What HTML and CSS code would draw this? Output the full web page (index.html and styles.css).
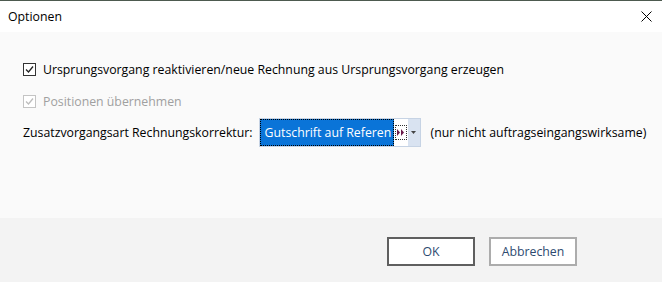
FILE: index.html
```html
<!DOCTYPE html>
<html lang="de">
<head>
  <meta charset="UTF-8">
  <title>Optionen</title>
  <link rel="stylesheet" href="styles.css">
</head>
<body>
  <div class="dialog">
    <div class="titlebar">
      <span class="title">Optionen</span>
      <svg class="close" width="11" height="11" viewBox="0 0 11 11">
        <path d="M0.5 0.5 L10.5 10.5 M10.5 0.5 L0.5 10.5" stroke="#000" stroke-width="1" fill="none"/>
      </svg>
    </div>

    <div class="content">
      <div class="row">
        <span class="check">
          <svg width="11" height="11" viewBox="0 0 11 11"><path d="M2 5.5 L4.5 8 L9 2.5" stroke="#222" stroke-width="1.3" fill="none"/></svg>
        </span>
        <span class="label">Ursprungsvorgang reaktivieren/neue Rechnung aus Ursprungsvorgang erzeugen</span>
      </div>
      <div class="row disabled">
        <span class="check">
          <svg width="11" height="11" viewBox="0 0 11 11"><path d="M2 5.5 L4.5 8 L9 2.5" stroke="#bdbdbd" stroke-width="1.3" fill="none"/></svg>
        </span>
        <span class="label">Positionen übernehmen</span>
      </div>
      <div class="row combo-row">
        <span class="field-label">Zusatzvorgangsart Rechnungskorrektur:</span>
        <div class="combo">
          <span class="combo-value">Gutschrift auf Referen</span>
          <span class="combo-btn">
            <svg width="9" height="7" viewBox="0 0 9 7"><path d="M1 0 L4 3.5 L1 7 Z M5 0 L8 3.5 L5 7 Z" fill="#6b1a4a"/></svg>
          </span>
          <span class="combo-arrow">
            <svg width="5" height="3" viewBox="0 0 5 3"><path d="M0 0 L5 0 L2.5 3 Z" fill="#444"/></svg>
          </span>
        </div>
        <span class="hint">(nur nicht auftragseingangswirksame)</span>
      </div>
    </div>

    <div class="footer">
      <button class="btn btn-default">OK</button>
      <button class="btn">Abbrechen</button>
    </div>
  </div>
</body>
</html>
```

FILE: styles.css
```css
body {
  margin: 0;
  font-family: "Open Sans", "Noto Sans", sans-serif;
  font-size: 12.3px;
  color: #000;
  background: #fff;
}
.dialog {
  width: 662px;
  height: 282px;
  display: flex;
  flex-direction: column;
}
.titlebar {
  height: 31px;
  border-top: 1px solid #4d5a4f;
  background: #fff;
  display: flex;
  align-items: center;
  justify-content: space-between;
  padding: 0 10px 0 8px;
}
.content {
  flex: 1;
  background: #fafafa;
  padding: 24px 0 0 23px;
}
.row {
  height: 26px;
  display: flex;
  align-items: center;
  margin-bottom: 6px;
}
.check {
  width: 11px;
  height: 11px;
  border: 1px solid #333;
  background: #fff;
  display: flex;
  margin-right: 7px;
}
.disabled .check {
  border-color: #c4c4c4;
}
.disabled .label {
  color: #a0a0a0;
}
.combo-row {
  margin-top: -1px;
}
.field-label {
  margin-right: 6px;
}
.combo {
  display: flex;
  height: 27px;
  border: 1px solid #c6d3e4;
  background: #fff;
}
.combo-value {
  flex: 0 0 auto;
  width: 129px;
  background: #0a74d8;
  color: #fff;
  outline: 1px dotted #000;
  outline-offset: -1px;
  padding-left: 5px;
  display: flex;
  align-items: center;
  white-space: nowrap;
}
.combo-btn {
  flex: 0 0 auto;
  width: 10px;
  margin: 6px 1px 6px 1px;
  border: 1px dotted #333;
  display: flex;
  align-items: center;
  justify-content: center;
}
.combo-arrow {
  flex: 0 0 auto;
  width: 12px;
  background: #d9e3f1;
  display: flex;
  align-items: center;
  justify-content: center;
}
.hint {
  margin-left: 10px;
}
.footer {
  height: 64px;
  background: #f3f3f3;
  display: flex;
  justify-content: flex-end;
  align-items: flex-start;
  gap: 14px;
  padding: 19px 85px 0 0;
  box-sizing: border-box;
}
.btn {
  width: 88px;
  height: 29px;
  background: #fff;
  border: 2px solid #acacac;
  font-family: inherit;
  font-size: 12.3px;
  color: #2d4a6f;
  padding: 0;
}
.btn-default {
  border-color: #5f5f5f;
}
```
